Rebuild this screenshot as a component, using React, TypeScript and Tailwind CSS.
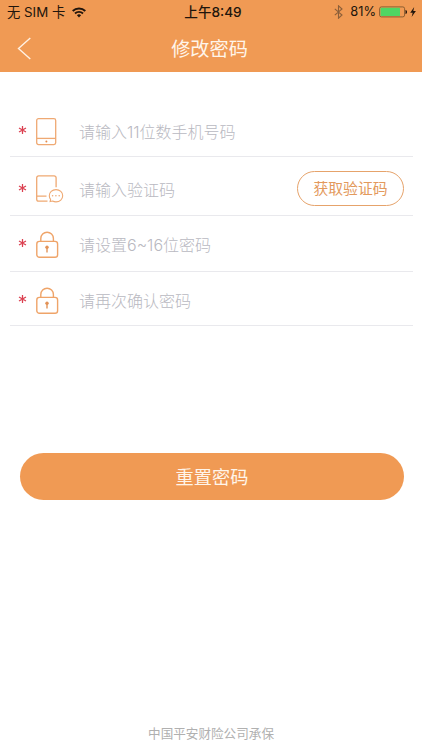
import type { ReactNode } from 'react';

function PhoneIcon() {
  return (
    <svg width="28" height="30" viewBox="0 0 28 30" fill="none" stroke="#efa973" strokeWidth="1.3">
      <rect x="0.7" y="1.6" width="19" height="26" rx="1.8" />
      <path d="M1 21.4h19" />
      <circle cx="10.4" cy="24.4" r="1" fill="#e58a48" stroke="none" />
    </svg>
  );
}

function MessageIcon() {
  return (
    <svg className="mb-[2px]" width="28" height="30" viewBox="0 0 28 30" fill="none" stroke="#efa973" strokeWidth="1.3">
      <path d="M20.1 13.2V3.8a1.9 1.9 0 0 0-1.9-1.9H2.6A1.9 1.9 0 0 0 .7 3.8v21.4a1.9 1.9 0 0 0 1.9 1.9h8.9M1 22.2h9.5" />
      <path d="M20 15.6c3.9 0 6.7 2.8 6.7 6.1s-2.8 6.2-6.7 6.2c-1.3 0-2.4-.3-3.5-.9l-2.4.6.5-2.2a5.9 5.9 0 0 1-1.3-3.7c0-3.3 2.8-6.1 6.7-6.1Z" strokeWidth="1.1" />
      <g fill="#efa973" stroke="none">
        <circle cx="16.6" cy="21.8" r="0.8" />
        <circle cx="19.9" cy="21.8" r="0.8" />
        <circle cx="23.2" cy="21.8" r="0.8" />
      </g>
    </svg>
  );
}

function LockIcon() {
  return (
    <svg width="28" height="30" viewBox="0 0 28 30" fill="none" stroke="#efa469" strokeWidth="1.4">
      <rect x="0.8" y="11.4" width="20.8" height="15.9" rx="2.6" />
      <path d="M4.8 11.4V8.5a6.3 6.3 0 0 1 12.6 0v2.9" />
      <circle cx="11" cy="17.2" r="1.7" fill="#e29358" stroke="none" />
      <path d="M11 17.5v5" stroke="#e29358" strokeWidth="1.4" />
    </svg>
  );
}

function Field({ icon, label, height, action }: { icon: ReactNode; label: string; height: string; action?: ReactNode }) {
  return (
    <div className={`flex items-center border-b border-[#e9e9ed] pl-2 ${height}`}>
      <svg className="mr-[9px] mb-1 shrink-0" width="9" height="10" viewBox="0 0 9 10" stroke="#db4050" strokeWidth="1.25">
        <path d="M4.5 1v8M1 3l7 4M8 3L1 7" />
      </svg>
      {icon}
      <span className="ml-[15px] flex-1 whitespace-nowrap text-[16px] leading-6 font-light text-[#b9b9c1]">{label}</span>
      {action}
    </div>
  );
}

export default function App() {
  return (
    <div className="flex h-[750px] w-full flex-col bg-white font-['Inter','Noto_Sans_CJK_SC',sans-serif]">
      <header className="h-[72px] shrink-0 bg-[#f09a54]">
        <div className="grid h-6 grid-cols-[1fr_auto_1fr] items-center pr-[5px] pl-[7px] text-[13px] leading-6 text-[#21150c]">
          <div className="flex items-center gap-[7px]">
            <span className="text-[13.3px]">无 SIM 卡</span>
            <svg width="14" height="11" viewBox="0 0 14 11" fill="none" stroke="#21150c" strokeWidth="1.9">
              <path d="M.7 4a9 9 0 0 1 12.6 0M3 6.5a5.7 5.7 0 0 1 8 0" />
              <path d="M7 10.5L4.9 8.3a3 3 0 0 1 4.2 0Z" fill="#21150c" stroke="none" />
            </svg>
          </div>
          <span className="pl-0.5 text-[13.6px] font-medium">上午8:49</span>
          <div className="flex items-center justify-end">
            <svg className="mr-[7px]" width="9" height="14" viewBox="0 0 9 14" fill="none" stroke="#8c5f39" strokeWidth="1.1">
              <path d="M.8 3.8L8 10 4.5 13.2V.8L8 4 .8 10.2" />
            </svg>
            <span className="text-[12.8px]">81%</span>
            <svg className="ml-[3px]" width="38" height="12" viewBox="0 0 38 12">
              <rect x="0.6" y="0.9" width="25" height="10" rx="1.8" fill="none" stroke="#80572c" strokeWidth="0.9" />
              <rect x="1.5" y="1.8" width="19.5" height="8.2" rx="0.6" fill="#4fd663" />
              <path d="M26.5 4c1.2.3 1.5 1 1.5 2s-.3 1.7-1.5 2Z" fill="#21150c" />
              <path d="M35.2 1L31.2 6.7h2.5L32.6 11l4.3-6h-2.6Z" fill="#21150c" />
            </svg>
          </div>
        </div>
        <div className="grid h-12 grid-cols-[1fr_auto_1fr] items-center pt-0.5 pr-[3px]">
          <svg className="ml-[17px]" width="15" height="24" viewBox="0 0 15 24" fill="none" stroke="#fff1e3" strokeWidth="1.4">
            <path d="M13.3 1L1.5 11.5l11.8 10.5" />
          </svg>
          <h1 className="text-[19.2px] leading-7 font-normal text-[#fff5ea]">修改密码</h1>
        </div>
      </header>

      <main className="flex flex-1 flex-col">
        <div className="mr-[9px] ml-[10px] pt-[34px]">
          <Field icon={<PhoneIcon />} label="请输入11位数手机号码" height="h-[51px] pt-0.5" />
          <Field
            icon={<MessageIcon />}
            label="请输入验证码"
            height="h-[59px] pt-[7px]"
            action={
              <button className="mr-[9px] mb-[2px] h-[35px] w-[107px] rounded-full border-[1.5px] border-[#e6a36b] pt-0.5 text-[14.8px] text-[#e3995c]">
                获取验证码
              </button>
            }
          />
          <Field icon={<LockIcon />} label="请设置6~16位密码" height="h-14 pt-[3px]" />
          <Field icon={<LockIcon />} label="请再次确认密码" height="h-[54px] pt-[5px]" />
        </div>
        <button className="mr-[18px] ml-5 mt-[127px] h-[47px] rounded-[23.5px] bg-[#f09a54] pt-0.5 text-[18.2px] text-[#fff5ea]">重置密码</button>
        <footer className="mt-auto pb-1.5 text-center text-[12.6px] leading-5 text-[#b0b0b0]">中国平安财险公司承保</footer>
      </main>
    </div>
  );
}
